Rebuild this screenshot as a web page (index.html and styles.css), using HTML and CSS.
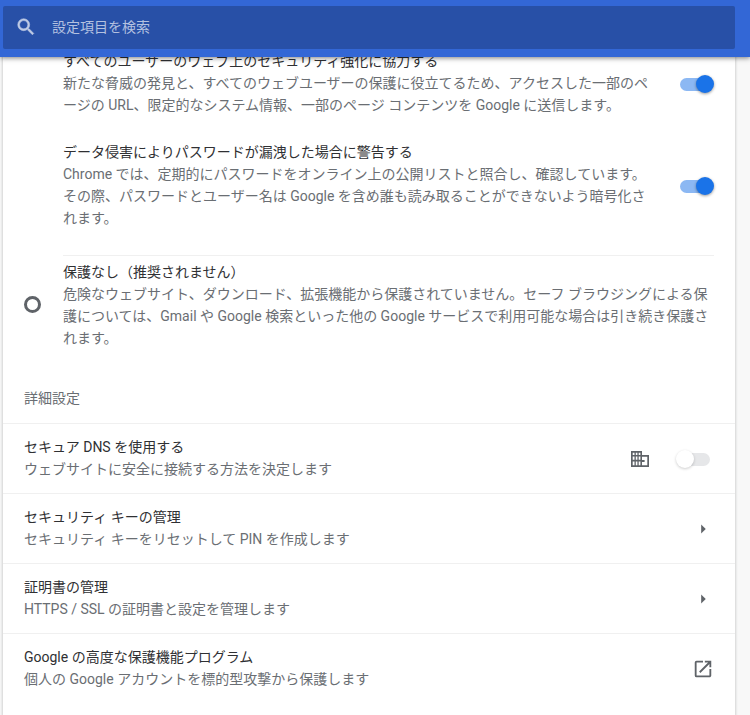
FILE: index.html
```html
<!DOCTYPE html>
<html lang="ja">
<head>
  <meta charset="UTF-8" />
  <meta name="viewport" content="width=device-width, initial-scale=1.0" />
  <title>設定</title>
  <link rel="stylesheet" href="styles.css">
</head>
<body>

  <header class="toolbar">
    <div class="search">
      <svg class="search-icon" viewBox="0 0 24 24" aria-hidden="true"><path d="M15.5 14h-.79l-.28-.27A6.471 6.471 0 0 0 16 9.5 6.5 6.5 0 1 0 9.5 16c1.61 0 3.09-.59 4.23-1.57l.27.28v.79l5 4.99L20.49 19l-4.99-5zm-6 0C7.01 14 5 11.99 5 9.5S7.01 5 9.5 5 14 7.01 14 9.5 11.99 14 9.5 14z"/></svg>
      <input class="search-input" type="search" placeholder="設定項目を検索" aria-label="設定項目を検索">
    </div>
  </header>

  <main class="card">
    <div class="option">
      <label class="text" for="reporting">
        <span class="title">すべてのユーザーのウェブ上のセキュリティ強化に協力する</span>
        <span class="desc">新たな脅威の発見と、すべてのウェブユーザーの保護に役立てるため、アクセスした一部のページの URL、限定的なシステム情報、一部のページ コンテンツを Google に送信します。</span>
      </label>
      <input class="toggle" type="checkbox" id="reporting" checked>
    </div>

    <div class="option">
      <label class="text" for="leak">
        <span class="title">データ侵害によりパスワードが漏洩した場合に警告する</span>
        <span class="desc">Chrome では、定期的にパスワードをオンライン上の公開リストと照合し、確認しています。その際、パスワードとユーザー名は Google を含め誰も読み取ることができないよう暗号化されます。</span>
      </label>
      <input class="toggle" type="checkbox" id="leak" checked>
    </div>

    <div class="choice">
      <input class="radio" type="radio" name="protection" id="none">
      <label class="text" for="none">
        <span class="title">保護なし（推奨されません）</span>
        <span class="desc">危険なウェブサイト、ダウンロード、拡張機能から保護されていません。セーフ ブラウジングによる保護については、Gmail や Google 検索といった他の Google サービスで利用可能な場合は引き続き保護されます。</span>
      </label>
    </div>

    <h2 class="section-title">詳細設定</h2>

    <div class="row">
      <label class="text" for="dns">
        <span class="title">セキュア DNS を使用する</span>
        <span class="desc">ウェブサイトに安全に接続する方法を決定します</span>
      </label>
      <svg class="managed" viewBox="0 0 18 16" aria-hidden="true"><path fill-rule="evenodd" d="M0 0H11V4H18V16H0zM1.7 1.7V4H3.5V1.7zM4.8 1.7V4H6.4V1.7zM7.7 1.7V4H9.4V1.7zM1.7 5.6V8.8H3.5V5.6zM4.8 5.6V8.8H6.4V5.6zM7.7 5.6V8.8H9.4V5.6zM1.7 10.4V14.3H3.5V10.4zM4.8 10.4V14.3H6.4V10.4zM7.7 10.4V14.3H9.4V10.4zM11 5.7V9H13.6V11H11V14.3H16.3V5.7z"/></svg>
      <input class="toggle" type="checkbox" id="dns" disabled>
    </div>

    <button class="row" type="button">
      <span class="text">
        <span class="title">セキュリティ キーの管理</span>
        <span class="desc">セキュリティ キーをリセットして PIN を作成します</span>
      </span>
      <svg class="icon" viewBox="0 0 24 24" aria-hidden="true"><path d="M10 7l5 5-5 5z"/></svg>
    </button>

    <button class="row" type="button">
      <span class="text">
        <span class="title">証明書の管理</span>
        <span class="desc">HTTPS / SSL の証明書と設定を管理します</span>
      </span>
      <svg class="icon" viewBox="0 0 24 24" aria-hidden="true"><path d="M10 7l5 5-5 5z"/></svg>
    </button>

    <a class="row" href="#">
      <span class="text">
        <span class="title">Google の高度な保護機能プログラム</span>
        <span class="desc">個人の Google アカウントを標的型攻撃から保護します</span>
      </span>
      <svg class="icon" viewBox="0 0 24 24" aria-hidden="true"><path d="M19 19H5V5h7V3H5a2 2 0 0 0-2 2v14a2 2 0 0 0 2 2h14c1.1 0 2-.9 2-2v-7h-2v7zM14 3v2h3.59l-9.83 9.83 1.41 1.41L19 6.41V10h2V3h-7z"/></svg>
    </a>
  </main>

</body>
</html>
```

FILE: styles.css
```css
:root {
  --blue: #1a73e8;
  --toolbar: #3367d6;
  --text: #2f3033;
  --secondary: #6a6e73;
  --icon: #5f6368;
  --line: #f0f0f0;
}
* {
  box-sizing: border-box;
}
body {
  margin: 0;
  background: #f8f8f8;
  font-family: Roboto, "Noto Sans CJK JP", sans-serif;
  font-size: 14px;
  line-height: 22px;
  color: var(--text);
}

.toolbar {
  position: fixed;
  top: 0;
  left: 0;
  right: 0;
  z-index: 10;
  padding: 6px 15px 8px 3px;
  background: var(--toolbar);
  box-shadow: 0 1px 5px rgba(0,0,0,0.5);
}
.search {
  display: flex;
  align-items: center;
  height: 43px;
  padding: 0 12px 2px;
  border-radius: 2px;
  background: #2850a7;
}
.search-icon {
  width: 22px;
  height: 22px;
  fill: #bfcbe5;
  stroke: #bfcbe5;
  stroke-width: 0.6;
}
.search-input {
  flex: 1;
  margin-left: 15px;
  padding: 0;
  border: none;
  outline: none;
  background: none;
  font: inherit;
  color: #fff;
}
.search-input::placeholder {
  color: #b4c1e0;
}

.card {
  min-height: 100vh;
  margin: 0 15px 0 3px;
  padding-top: 51px;
  background: #fff;
  box-shadow: 0 0 2px 1px rgba(60,64,67,0.2);
}

.text {
  flex: 1;
}
.title, .desc {
  display: block;
}
.title {
  line-height: 21px;
}
.desc {
  color: var(--secondary);
}

.option {
  display: flex;
  align-items: center;
  gap: 20px;
  padding: 0 21px 26px 60px;
}

.choice {
  display: flex;
  align-items: center;
  padding: 0 21px;
}
.choice .text {
  margin-left: 22px;
  padding-top: 6px;
  border-top: 1px solid var(--line);
}
.radio {
  appearance: none;
  width: 17px;
  height: 17px;
  margin: 4px 0 0;
  border: 3px solid var(--icon);
  border-radius: 50%;
}
.radio:checked {
  border-color: var(--blue);
  background: radial-gradient(var(--blue) 45%, transparent 50%);
}

.section-title {
  margin: 0;
  padding: 38px 21px 14px;
  font-size: 14px;
  font-weight: 400;
  color: var(--secondary);
}

.row {
  display: flex;
  align-items: center;
  width: 100%;
  padding: 13px 21px;
  border: none;
  border-top: 1px solid var(--line);
  background: none;
  font: inherit;
  text-align: left;
  text-decoration: none;
  color: inherit;
}
.icon {
  width: 22px;
  height: 22px;
  fill: var(--icon);
}
.managed {
  width: 18px;
  height: 16px;
  margin-right: 27px;
  fill: var(--icon);
}

.toggle {
  appearance: none;
  position: relative;
  width: 38px;
  height: 18px;
  margin: 0;
}
.toggle::before {
  content: '';
  position: absolute;
  top: 3px;
  left: 4px;
  right: 4px;
  height: 13px;
  border-radius: 7px;
  background: #e6e7e9;
}
.toggle::after {
  content: '';
  position: absolute;
  top: 0;
  left: 0;
  width: 18px;
  height: 18px;
  border-radius: 50%;
  background: #fff;
  box-shadow: 0 1px 3px rgba(0,0,0,0.2);
}
.toggle:checked::before {
  background: #8cb8f3;
}
.toggle:checked::after {
  left: auto;
  right: 0;
  background: var(--blue);
  box-shadow: 0 1px 3px rgba(0,0,0,0.4);
}
```
